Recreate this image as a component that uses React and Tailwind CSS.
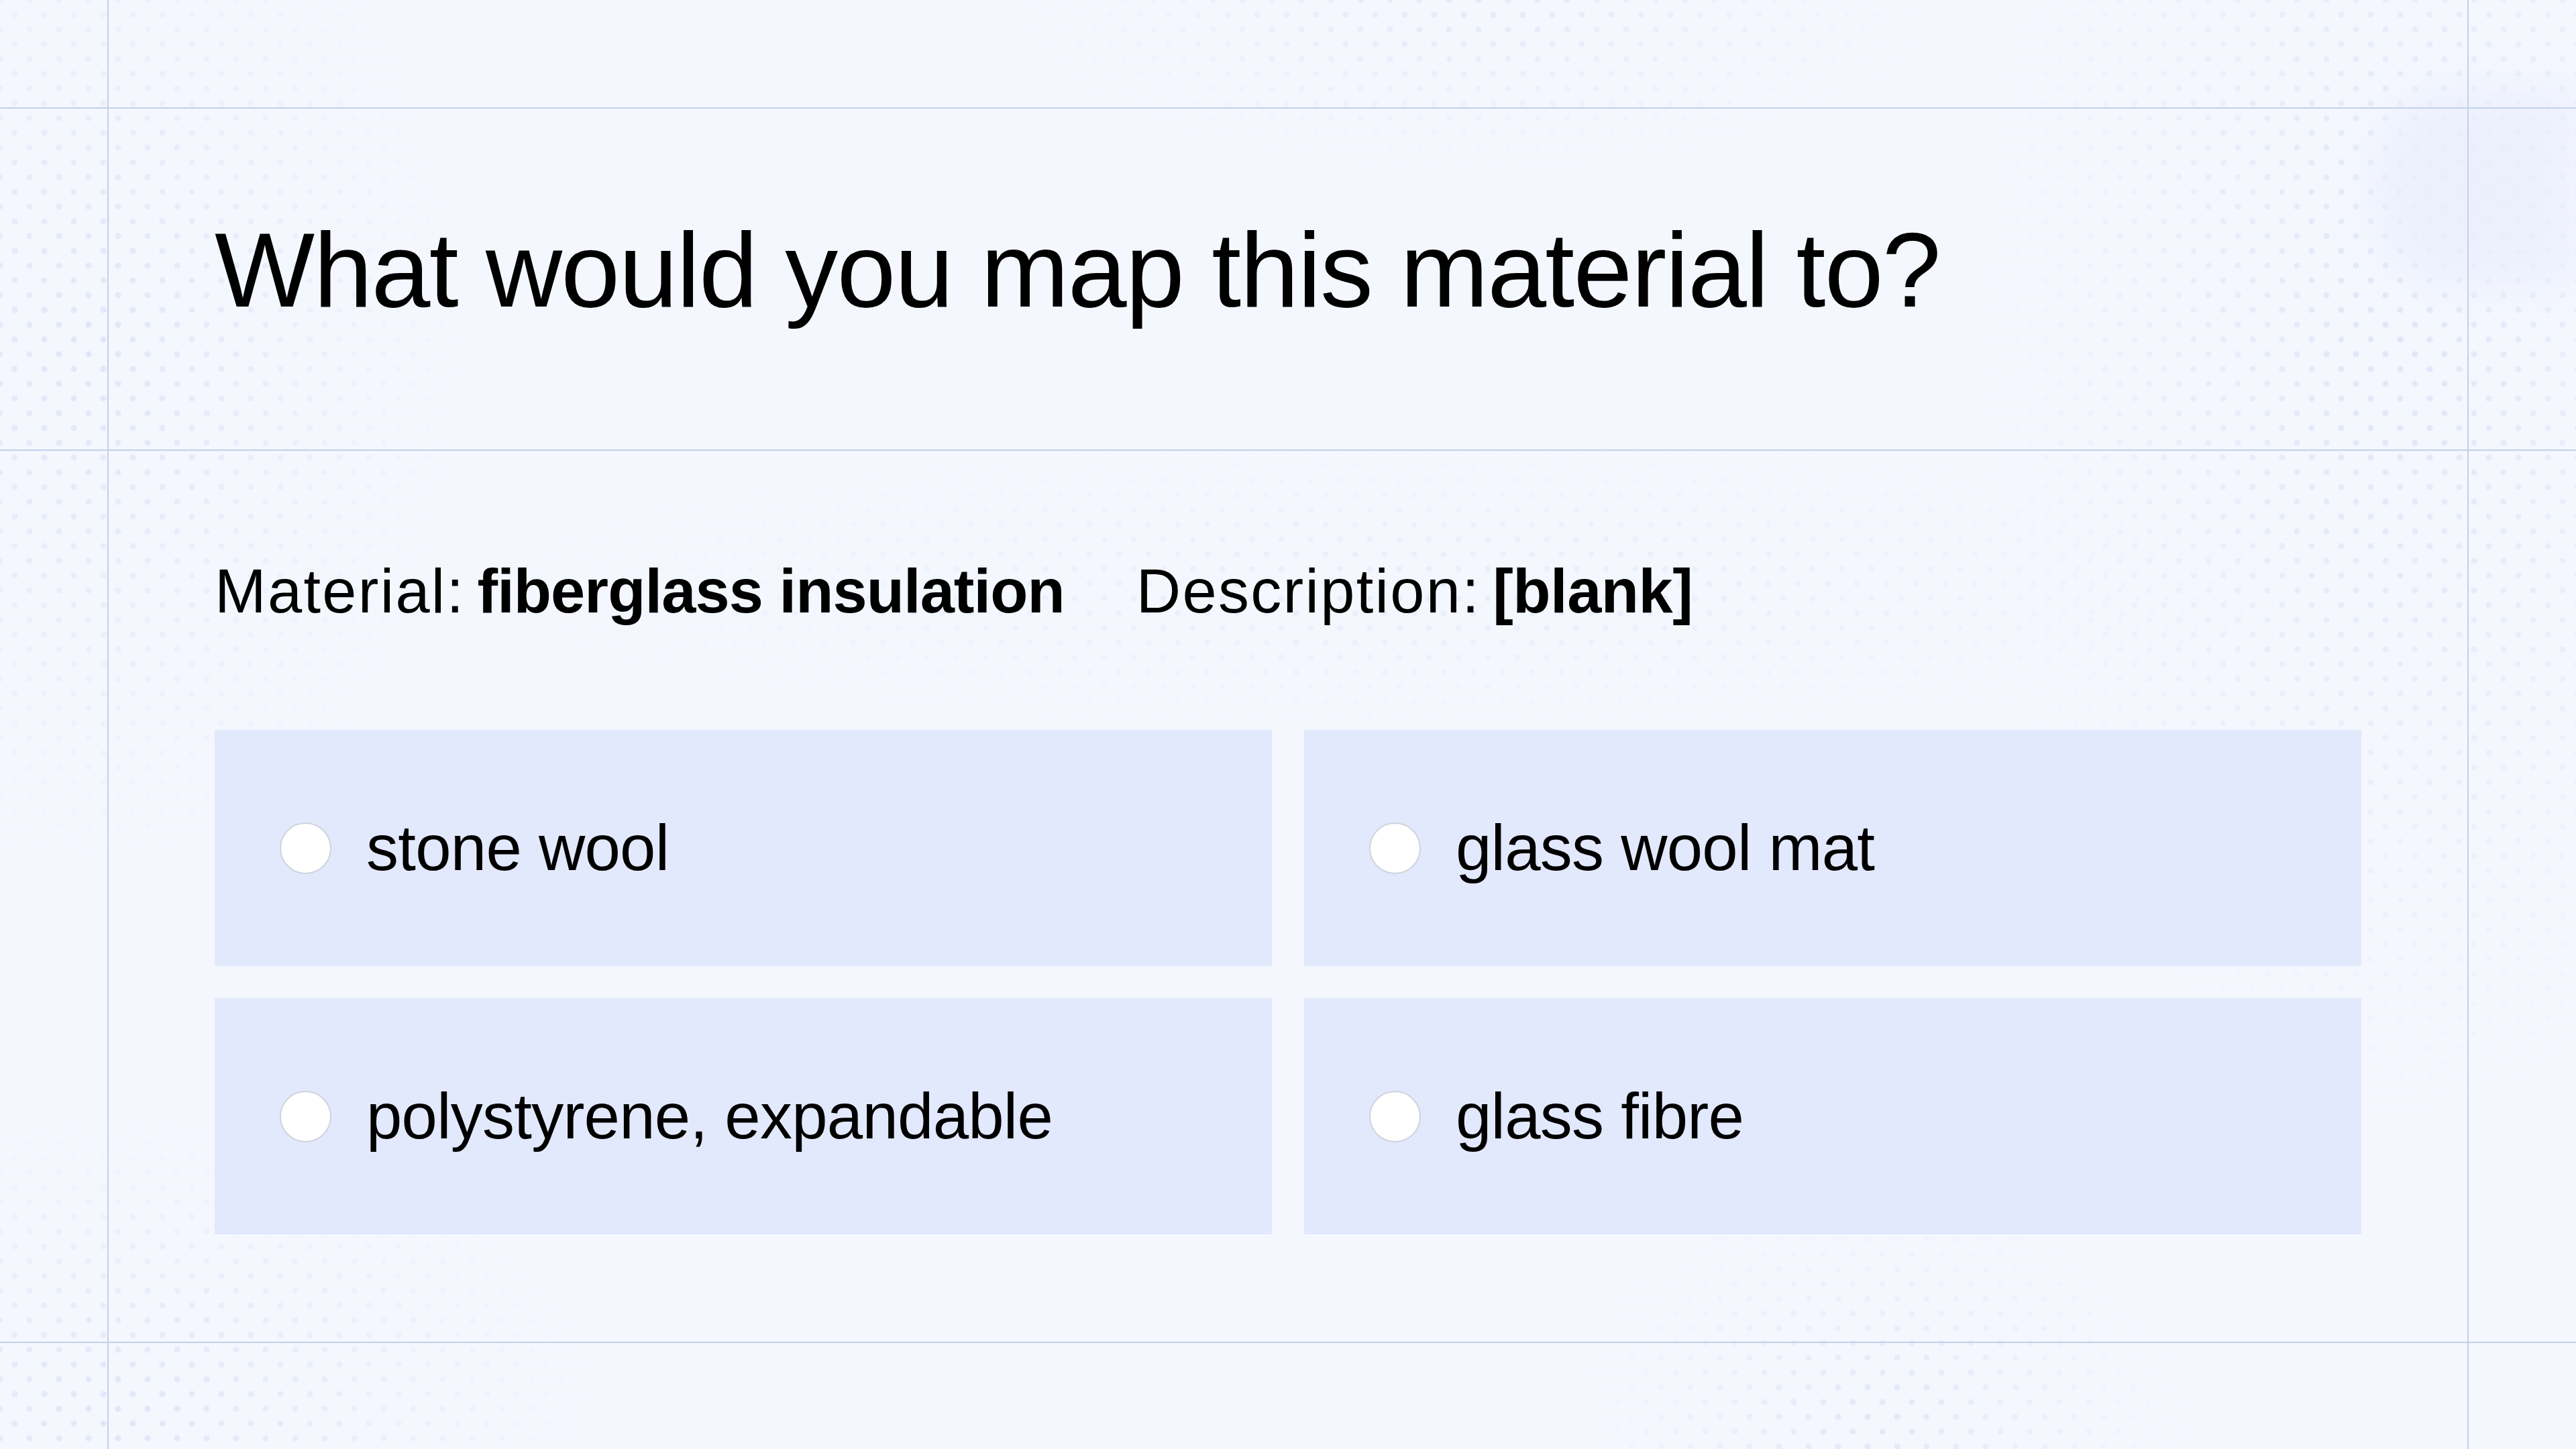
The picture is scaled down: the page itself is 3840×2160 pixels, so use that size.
import { useState } from "react";

const OPTIONS = [
  "stone wool",
  "glass wool mat",
  "polystyrene, expandable",
  "glass fibre",
];

// faint halftone patches behind the page
const DOTS =
  "bg-[radial-gradient(circle,#e0e6f8_4px,transparent_5px),radial-gradient(circle,#e0e6f8_4px,transparent_5px)] bg-[length:44px_44px] bg-[position:0_0,22px_22px]";

function Patch({ className }) {
  return <div className={`pointer-events-none absolute ${DOTS} ${className}`} />;
}

function Option({ label, selected, onSelect }) {
  return (
    <button
      type="button"
      onClick={onSelect}
      className="flex h-[352px] items-center bg-[#e3e9fc] pl-[97px] text-left"
    >
      <span
        className={`h-[77px] w-[77px] shrink-0 rounded-full border-2 ${
          selected ? "border-[#1f2937] bg-[#1f2937]" : "border-[#d0d3db] bg-white"
        }`}
      />
      <span className="ml-[52px] text-[96px] leading-none tracking-[-0.008em] text-black">
        {label}
      </span>
    </button>
  );
}

export default function App() {
  const [picked, setPicked] = useState(null);

  return (
    <div className="relative h-[2160px] w-[3840px] overflow-hidden bg-[#f4f7fe] font-['Liberation_Sans',Arial,sans-serif] text-black">
      {/* background halftone */}
      <Patch className="left-0 top-0 h-[1300px] w-[700px] [mask-image:radial-gradient(ellipse_at_20%_40%,black_0%,transparent_70%)]" />
      <Patch className="left-[1500px] top-0 h-[260px] w-[1400px] [mask-image:radial-gradient(ellipse_at_50%_0%,black_0%,transparent_70%)] opacity-80" />
      <Patch className="right-0 top-0 h-[1700px] w-[900px] [mask-image:radial-gradient(ellipse_at_70%_30%,black_0%,transparent_70%)]" />
      <Patch className="left-[700px] top-[650px] h-[450px] w-[2900px] [mask-image:radial-gradient(ellipse_at_50%_50%,black_0%,transparent_70%)] opacity-60" />
      <Patch className="bottom-0 left-0 h-[500px] w-[900px] [mask-image:radial-gradient(ellipse_at_20%_90%,black_0%,transparent_70%)]" />
      <Patch className="bottom-0 left-[2300px] h-[400px] w-[1000px] [mask-image:radial-gradient(ellipse_at_50%_90%,black_0%,transparent_65%)] opacity-90" />
      <div className="pointer-events-none absolute right-0 top-[130px] h-[300px] w-[300px] rounded-l-[120px] bg-[#ebeffd] opacity-80 blur-[30px]" />

      <div className="relative flex h-full flex-col">
        <div className="h-[160px]">
          <div className="mx-[160px] h-full border-x-2 border-[#c3d0ea]" />
        </div>

        <div className="h-[510px] border-t-2 border-[#c3d0ea]">
          <div className="mx-[160px] h-full border-x-2 border-[#c3d0ea] pl-[158px] pt-[161px]">
            <h1 className="text-[158px] font-normal leading-none tracking-[-0.011em]">
              What would you map this material to?
            </h1>
          </div>
        </div>

        <div className="h-[1330px] border-t-2 border-[#c3d0ea]">
          <div className="mx-[160px] h-full border-x-2 border-[#c3d0ea] px-[158px] pt-[163px]">
            <div className="flex gap-[107px] text-[92px] leading-none">
              <p className="tracking-[0.025em]">
                Material:
                <span className="ml-[18px] font-bold tracking-[-0.01em]">fiberglass insulation</span>
              </p>
              <p className="tracking-[0.025em]">
                Description:
                <span className="ml-[18px] font-bold tracking-[-0.005em]">[blank]</span>
              </p>
            </div>

            <div className="mt-[161px] grid grid-cols-2 gap-[48px]">
              {OPTIONS.map((o, i) => (
                <Option
                  key={o}
                  label={o}
                  selected={picked === i}
                  onSelect={() => setPicked(i)}
                />
              ))}
            </div>
          </div>
        </div>

        <div className="flex-1 border-t-2 border-[#c3d0ea]">
          <div className="mx-[160px] h-full border-x-2 border-[#c3d0ea]" />
        </div>
      </div>
    </div>
  );
}
